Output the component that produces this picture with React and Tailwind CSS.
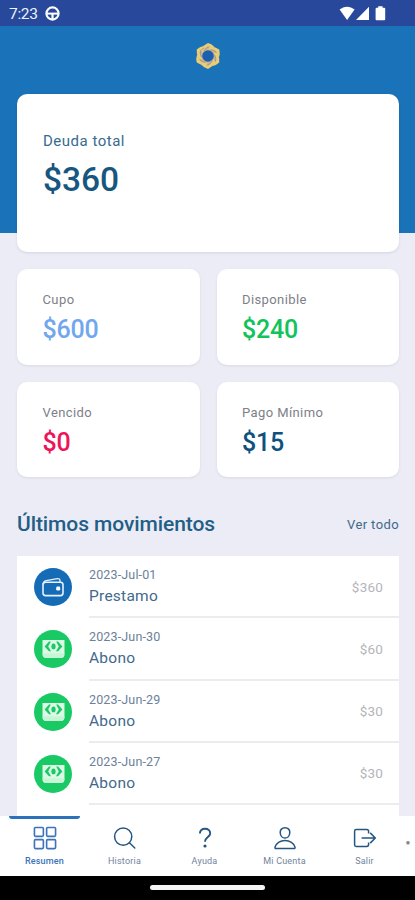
import { IoGridOutline } from 'react-icons/io5';

const balances = [
    { label: "Cupo", amount: "$600", color: "text-[#70a7ee]" },
    { label: "Disponible", amount: "$240", color: "text-[#12c35b]" },
    { label: "Vencido", amount: "$0", color: "text-[#ed145b]" },
    { label: "Pago Mínimo", amount: "$15", color: "text-[#0d527f]" },
];

const movements = [
    { date: "2023-Jul-01", name: "Prestamo", amount: "$360", type: "loan" },
    { date: "2023-Jun-30", name: "Abono", amount: "$60", type: "payment" },
    { date: "2023-Jun-29", name: "Abono", amount: "$30", type: "payment" },
    { date: "2023-Jun-27", name: "Abono", amount: "$30", type: "payment" },
];

const petals = [0, 60, 120, 180, 240, 300];

const Logo = () => (
    <svg width="26" height="28" viewBox="-13 -14 26 28" fill="none">
        <circle r="8" fill="#1b5fb0" />
        <circle r="7.6" stroke="#c9b58a" strokeWidth="3.6" />
        {petals.map((angle) => (
            <g key={angle} transform={`rotate(${angle})`}>
                <path d="M-7.4 -6.2Q-4.6 -11 0 -13Q4.2 -11.8 6.4 -9L5 -7.6Q2.4 -9.4 -0.6 -9.2Q-4 -7.6 -5.4 -3.6Z" fill="#ebcd74" />
                <path d="M-4.2 -5Q-2.4 -8.4 0.6 -9Q3.4 -8.8 5 -7.4" stroke="#9c93a3" strokeWidth="0.8" />
            </g>
        ))}
    </svg>
);

const StatusBar = () => (
    <div className="flex h-[26px] shrink-0 items-center justify-between bg-[#27489b] pl-[9px] pr-[28px] pt-px">
        <div className="flex items-center gap-[7px]">
            <span className="pt-[2px] text-[15.5px] leading-none tracking-[-0.3px] text-[#eef2fb]">7:23</span>
            <svg width="15" height="15" viewBox="0 0 15 15" fill="none" stroke="#fff">
                <circle cx="7.5" cy="7.5" r="6.1" strokeWidth="2.1" />
                <path d="M2 7.6h11" strokeWidth="2" />
                <path d="M7.5 8v5" strokeWidth="2.2" />
            </svg>
        </div>
        <svg width="48" height="15" viewBox="0 0 48 15" fill="#fff">
            <path d="M0.6 3.6C5 -0.3 11 -0.3 15.6 3.6L8.1 14Z" />
            <path d="M30 0.8V14H17Z" />
            <path d="M39.2 0.2h4.4v1.6h1.6q1 0 1 1v10.4q0 1 -1 1h-7.6q-1 0 -1 -1V2.8q0 -1 1 -1h1.6Z" />
        </svg>
    </div>
);

const WalletIcon = () => (
    <svg width="22" height="20" viewBox="0 0 22 20" fill="none" stroke="#e8f1fb" strokeWidth="1.6" strokeLinejoin="round">
        <rect x="1" y="5.2" width="20" height="13.4" rx="2.6" />
        <path d="M1.2 7.5Q1.2 4.2 4.2 3.6L15.4 1.6Q18 1.3 18 3.6V5" strokeWidth="1.3" />
        <rect x="14.2" y="9.6" width="4" height="4" rx="1.4" fill="#fff" stroke="none" />
    </svg>
);

const CashIcon = () => (
    <svg width="23" height="20" viewBox="0 0 23 20">
        <path d="M0.5 1H22.5V14.5Q22.5 19 18.5 19H4.5Q0.5 19 0.5 14.5Z" fill="#dbf9e5" />
        <path d="M0.5 14.4H22.5Q22.5 19 18.5 19H4.5Q0.5 19 0.5 14.4Z" fill="#c6f6d6" />
        <path d="M8.8 2.6L7 2.6L2.6 7.4L7 12.2L9 12.2L6.2 7.4Z" fill="#18c964" />
        <path d="M14.2 2.6L16 2.6L20.4 7.4L16 12.2L14 12.2L16.8 7.4Z" fill="#18c964" />
        <ellipse cx="11.5" cy="7.4" rx="2.1" ry="2.9" fill="#18c964" />
    </svg>
);

const SearchIcon = () => (
    <svg width="24" height="24" viewBox="0 0 24 24" fill="none" stroke="currentColor" strokeWidth="1.5" strokeLinecap="round">
        <circle cx="10.2" cy="10.6" r="8.6" />
        <path d="M16.4 16.8L21.8 22" />
    </svg>
);

const HelpIcon = () => (
    <svg width="24" height="24" viewBox="0 0 24 24" fill="none">
        <path d="M6.9 7.6C6.9 4.2 9 2.8 12 2.8S17.2 4.6 17.2 7.4C17.2 11 12 11.2 12 15.8" stroke="currentColor" strokeWidth="1.9" />
        <circle cx="12" cy="20" r="1.6" fill="currentColor" />
    </svg>
);

const PersonIcon = () => (
    <svg width="24" height="24" viewBox="0 0 24 24" fill="none" stroke="currentColor" strokeWidth="1.5" strokeLinejoin="round">
        <path d="M12 1.7C9 1.7 7 3.8 7.2 6.7C7.4 9.7 9.4 12.1 12 12.1S16.6 9.7 16.8 6.7C17 3.8 15 1.7 12 1.7Z" />
        <path d="M12 14.6C7.4 14.6 2.9 17 2 21.2Q1.8 22.6 3 22.6H21Q22.2 22.6 22 21.2C21.1 17 16.6 14.6 12 14.6Z" />
    </svg>
);

const ExitIcon = () => (
    <svg width="24" height="24" viewBox="0 0 24 24" fill="none" stroke="currentColor" strokeWidth="1.5" strokeLinejoin="round">
        <path d="M15.6 7.4V5.4Q15.6 3.6 13.8 3.6H3.2Q1.6 3.6 1.6 5.2V18.8Q1.6 20.4 3.2 20.4H13.8Q15.6 20.4 15.6 18.6V16.6" />
        <path d="M8.6 12H22.3M17.2 6.9L22.3 12L17.2 17.1" />
    </svg>
);

const tabs = [
    { label: "Resumen", icon: <IoGridOutline size={26} /> },
    { label: "Historia", icon: <SearchIcon /> },
    { label: "Ayuda", icon: <HelpIcon /> },
    { label: "Mi Cuenta", icon: <PersonIcon /> },
    { label: "Salir", icon: <ExitIcon /> },
];

const BottomNav = () => (
    <nav className="flex h-[60px] shrink-0 bg-white pl-[4.5px]">
        {tabs.map((tab, index) => (
            <div
                key={tab.label}
                className={`flex w-20 shrink-0 flex-col items-center ${index === 0 ? 'text-[#3c73b9]' : 'text-[#245681]'}`}
            >
                <div className={`h-[3px] w-[71px] ${index === 0 ? 'rounded-b-sm bg-[#2b72b8]' : ''}`}></div>
                <div className="mt-[6px] flex h-[26px] items-center">{tab.icon}</div>
                <span className={`mt-[5px] text-[9px] leading-[10px] tracking-[0.2px] ${index === 0 ? 'font-medium' : 'text-[#71839a]'}`}>{tab.label}</span>
            </div>
        ))}
        <span className="ml-[1px] mt-[22px] text-[8px] leading-[10px] text-[#888]">●</span>
    </nav>
);

const App = () => {
    return (
        <div className="flex h-[900px] w-[415px] flex-col overflow-hidden bg-[#ebecf6] font-['Roboto',sans-serif]">
            <StatusBar />

            <main className="min-h-0 flex-1 overflow-hidden">
                <div className="flex h-[207px] justify-center bg-[#1a73b8] pt-4">
                    <Logo />
                </div>

                <div className="-mt-[139px] pl-[17px] pr-4">
                    {/* total debt */}
                    <div className="h-[158px] rounded-[10px] bg-white px-[26px] pt-[37px] text-[#17577f] shadow-[0_1px_3px_rgba(0,0,0,0.1)]">
                        <p className="text-[15px] leading-5 tracking-[0.5px] text-[#386b8d]">Deuda total</p>
                        <p className="mt-[9px] text-[33.5px] font-medium leading-[40px]">$360</p>
                    </div>

                    <div className="mt-[17px] grid grid-cols-[182.5px_182.5px] justify-between gap-y-[17px]">
                        {balances.map((item) => (
                            <div key={item.label} className="h-[95.5px] rounded-[10px] bg-white px-[25.5px] pt-[22px] shadow-[0_1px_3px_rgba(0,0,0,0.08)]">
                                <p className="text-[13px] leading-[18px] tracking-[0.4px] text-[#7e7f88]">{item.label}</p>
                                <p className={`mt-[5.4px] text-[25px] font-medium leading-[32px] tracking-[-0.2px] ${item.color}`}>{item.amount}</p>
                            </div>
                        ))}
                    </div>

                    <div className="mt-[32px] flex h-[30px] items-center justify-between">
                        <h2 className="pt-px text-[21px] font-medium tracking-[-0.08px] text-[#235e87]">Últimos movimientos</h2>
                        <span className="pt-px text-[13px] tracking-[0.4px] text-[#416989]">Ver todo</span>
                    </div>

                    <div className="mt-[17px] h-[300px] bg-white">
                        {movements.map((item) => (
                            <div key={item.date} className="flex h-[62.3px] pl-[17px]">
                                <div className={`mt-3 flex h-[38px] w-[38px] shrink-0 items-center justify-center rounded-full ${item.type === 'loan' ? 'bg-[#166bb7]' : 'bg-[#18c964]'}`}>
                                    {item.type === 'loan' ? <WalletIcon /> : <CashIcon />}
                                </div>
                                <div className="ml-[17px] flex flex-1 items-center justify-between border-b-2 border-[#ebecef] pr-[16px]">
                                    <div>
                                        <p className="text-[12.5px] leading-[18px] tracking-[0.15px] text-[#6b8199]">{item.date}</p>
                                        <p className="mt-[2px] text-[15.5px] leading-[20px] tracking-[0.25px] text-[#42698b]">{item.name}</p>
                                    </div>
                                    <span className="pt-px text-[13.5px] tracking-[0.2px] text-[#b4b5ba]">{item.amount}</span>
                                </div>
                            </div>
                        ))}
                    </div>
                </div>
            </main>

            <BottomNav />

            <div className="flex h-6 shrink-0 justify-center bg-black pt-[9px]">
                <div className="h-[5px] w-[115px] rounded-full bg-[#f5f5f5]"></div>
            </div>
        </div>
    )
}

export default App
